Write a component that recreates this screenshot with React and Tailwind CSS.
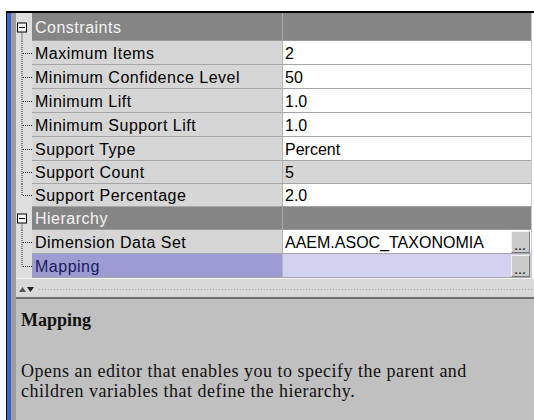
import React from 'react';

const rows = [
  { group: true, label: 'Constraints', h: 28 },
  { label: 'Maximum Items', value: '2', h: 24 },
  { label: 'Minimum Confidence Level', value: '50', h: 24 },
  { label: 'Minimum Lift', value: '1.0', h: 24 },
  { label: 'Minimum Support Lift', value: '1.0', h: 24 },
  { label: 'Support Type', value: 'Percent', h: 24 },
  { label: 'Support Count', value: '5', readOnly: true, h: 23 },
  { label: 'Support Percentage', value: '2.0', last: true, h: 23 },
  { group: true, label: 'Hierarchy', h: 23 },
  { label: 'Dimension Data Set', value: 'AAEM.ASOC_TAXONOMIA', editor: true, h: 24 },
  { label: 'Mapping', value: '', editor: true, last: true, selected: true, h: 24 },
];

// dotted tree connectors / collapse box in the left gutter
function TreeCell({ group, last, h }) {
  const mid = Math.floor(h / 2) + 0.5;
  return (
    <svg width="16" height={h} className="block shrink-0 bg-[#dedede]">
      {group ? (
        <>
          <rect x="1.5" y={mid - 4.5} width="9" height="9" fill="#f4f4f4" stroke="#000" />
          <line x1="3" y1={mid} x2="9" y2={mid} stroke="#000" />
          <line x1="6" y1={mid + 5} x2="6" y2={h} stroke="#222" strokeDasharray="1 1" />
        </>
      ) : (
        <>
          <line x1="6" y1="0" x2="6" y2={last ? mid : h} stroke="#222" strokeDasharray="1 1" />
          <line x1="7" y1={mid} x2="16" y2={mid} stroke="#222" strokeDasharray="1 1" />
        </>
      )}
    </svg>
  );
}

function EditorButton() {
  return (
    <div className="ml-auto mr-[1px] w-[19px] h-[22px] shrink-0 bg-[#cbcbcb] border border-t-[#f2f2f2] border-l-[#f2f2f2] border-r-[#7a7a7a] border-b-[#7a7a7a] flex items-end justify-center pb-[2px]">
      <span className="text-[11px] leading-[8px] tracking-[1px] text-[#222] font-bold">...</span>
    </div>
  );
}

function Row({ row }) {
  const h = row.h;
  if (row.group) {
    return (
      <div className="flex" style={{ height: h }}>
        <TreeCell group h={h} />
        <div className="w-[251px] shrink-0 bg-[#858585] border-r border-[#a8a8a8] border-b border-b-[#9a9a9a] flex items-center pt-[2px] pl-[3px] text-[16px] tracking-[0.5px] text-[#f4f4f4]">
          {row.label}
        </div>
        <div className="flex-1 bg-[#858585] border-b border-[#9a9a9a]" />
      </div>
    );
  }
  const labelBg = row.selected ? 'bg-[#9c9cd2] text-[#1a1a5e]' : 'bg-[#d6d6d6] text-black';
  const valueBg = row.selected ? 'bg-[#d2d2f0]' : row.readOnly ? 'bg-[#d6d6d6]' : 'bg-white';
  return (
    <div className="flex" style={{ height: h }}>
      <TreeCell last={row.last} h={h} />
      <div className={`w-[251px] shrink-0 border-r border-[#b4b4b4] border-b border-b-[#a6a6a6] flex items-center pt-[2px] pl-[3px] text-[16px] tracking-[0.5px] ${labelBg}`}>
        {row.label}
      </div>
      <div className={`flex-1 flex items-center pl-[2px] border-b border-[#a6a6a6] text-[16px] text-black ${valueBg}`}>
        <span className="pt-[2px]">{row.value}</span>
        {row.editor && <EditorButton />}
      </div>
    </div>
  );
}

function Splitter() {
  return (
    <div className="h-[21px] shrink-0 bg-[#d8d8d8] border-t border-[#f4f4f4] border-b-2 border-b-[#6e6e6e] flex items-center pt-[3px] pl-[3px] gap-[1px]">
      <svg width="7" height="5" className="block">
        <polygon points="0,5 3.5,0 7,5" fill="#555" />
      </svg>
      <svg width="7" height="5" className="block">
        <polygon points="0,0 7,0 3.5,5" fill="#222" />
      </svg>
      <div className="flex-1 ml-[3px] h-[3px] bg-[radial-gradient(#a2a2a2_0.8px,transparent_1px)] bg-[length:3px_3px]" />
    </div>
  );
}

export default function App() {
  return (
    <div className="w-[534px] h-[420px] bg-white pt-[11px] pl-[6px] overflow-hidden font-['Liberation_Sans',Arial,sans-serif]">
      <div className="flex h-full border-l border-t-2 border-black">
        <div className="w-[4px] shrink-0 bg-[#3a66cc]" />
        <div className="w-[5px] shrink-0 bg-[#9c9c9c]" />
        <div className="flex-1 flex flex-col">
          <div className="flex flex-col border-r border-[#c8c8c8] mr-[2px]">
            {rows.map((r) => (
              <Row key={r.label} row={r} />
            ))}
          </div>
          <Splitter />
          <div className="flex-1 bg-[#c0c0c0] pl-[5px] pt-[11px] font-['Liberation_Serif','Times_New_Roman',serif] text-[#111]">
            <div className="text-[18px] leading-[20px] font-bold">Mapping</div>
            <p className="mt-[31px] text-[18px] leading-[20px] tracking-[0.5px]">
              Opens an editor that enables you to specify the parent and
              <br />
              children variables that define the hierarchy.
            </p>
          </div>
        </div>
      </div>
    </div>
  );
}
